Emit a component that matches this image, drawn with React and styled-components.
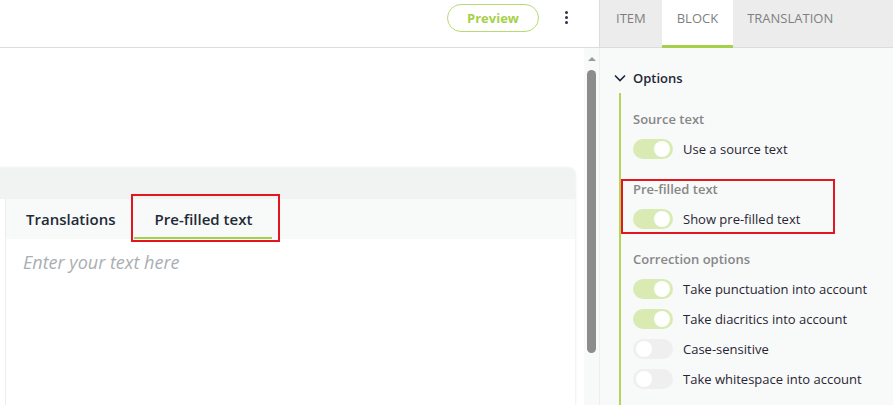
import React from "react"
import styled, { createGlobalStyle } from "styled-components"

const GlobalStyle = createGlobalStyle`
  html, body {
    margin: 0;
    padding: 0;
    background: #ffffff;
    font-family: "Open Sans", "Noto Sans", sans-serif;
  }
  * { box-sizing: border-box; }
`

const GREEN = "#a6d04a"

const Page = styled.div`
  width: 893px;
  height: 405px;
  display: flex;
  overflow: hidden;
`

const Main = styled.div`
  width: 600px;
  display: flex;
  flex-direction: column;
  min-height: 0;
`

const TopBar = styled.header`
  flex-shrink: 0;
  height: 48px;
  border-bottom: 1px solid #dcdcdc;
  border-right: 1px solid #dcdcdc;
  display: flex;
  align-items: flex-start;
  justify-content: flex-end;
  padding: 4px 30px 0 0;
  gap: 26px;
`

const PreviewButton = styled.button`
  width: 92px;
  height: 28px;
  border-radius: 14px;
  border: 1.5px solid #b8da72;
  background: #fff;
  color: ${GREEN};
  font-family: inherit;
  font-weight: 700;
  font-size: 13px;
  padding: 0;
`

const Kebab = styled.div`
  width: 4px;
  padding-top: 7px;
  display: flex;
  flex-direction: column;
  gap: 2px;
  span {
    width: 3px;
    height: 3px;
    border-radius: 50%;
    background: #2b3445;
  }
`

const Body = styled.div`
  flex: 1;
  min-height: 0;
  display: flex;
  overflow: hidden;
`

const Content = styled.div`
  flex: 1;
  padding-top: 120px;
`

const Card = styled.div`
  margin-left: -8px;
  margin-right: 9px;
  height: 260px;
  border-radius: 0 6px 0 0;
  background: #fff;
  box-shadow: 0 0 3px rgba(0, 0, 0, 0.12);
  overflow: hidden;
`

const CardHead = styled.div`
  height: 31px;
  background: #f1f2f2;
`

const Pane = styled.div`
  margin-left: 13px;
  border-left: 1px solid #ececec;
  height: 100%;
`

const CardTabs = styled.div`
  height: 40px;
  background: #f8f9f9;
  display: flex;
  align-items: stretch;
  padding-left: 20px;
`

const CardTab = styled.div`
  position: relative;
  margin-right: ${p => (p.$wide ? "0" : "19px")};
  width: ${p => (p.$wide ? "138px" : "auto")};
  display: flex;
  align-items: center;
  justify-content: center;
  font-size: 15px;
  font-weight: 600;
  color: #222a36;
  padding-top: 2px;
  border-bottom: 2px solid ${p => (p.$active ? GREEN : "transparent")};
`

const Highlight = styled.div`
  position: absolute;
  border: 2px solid #e3161f;
  pointer-events: none;
  left: ${p => p.$l}px;
  top: ${p => p.$t}px;
  right: ${p => p.$r}px;
  bottom: ${p => p.$b}px;
`

const Placeholder = styled.div`
  padding: 11px 0 0 17px;
  font-size: 18px;
  font-style: italic;
  color: #a9aeb3;
`

const Track = styled.div`
  width: 16px;
  background: #f8f9f9;
  border-right: 1px solid #eeeeee;
  display: flex;
  flex-direction: column;
  align-items: center;
  padding-top: 9px;
`

const Arrow = styled.div`
  flex-shrink: 0;
  width: 0;
  height: 0;
  border-left: 4px solid transparent;
  border-right: 4px solid transparent;
  border-bottom: 4px solid #9a9a9a;
  margin-bottom: 9px;
`

const Thumb = styled.div`
  flex-shrink: 0;
  width: 9px;
  height: 283px;
  border-radius: 5px;
  background: #8c8c8c;
`

const Side = styled.aside`
  flex: 1;
  display: flex;
  flex-direction: column;
  background: #f8f9f9;
  min-height: 0;
  overflow: hidden;
`

const SideTabs = styled.div`
  flex-shrink: 0;
  height: 48px;
  background: #ececec;
  border-bottom: 1px solid #dcdcdc;
  display: flex;
`

const SideTab = styled.div`
  padding: 8px ${p => p.$pad}px 0;
  line-height: 20px;
  font-size: 13px;
  color: #7f7f7f;
  text-transform: uppercase;
  background: ${p => (p.$active ? "#fff" : "transparent")};
  border-bottom: 3px solid ${p => (p.$active ? GREEN : "transparent")};
  margin-bottom: -1px;
`

const SideBody = styled.div`
  flex-shrink: 0;
  padding: 21px 0 0 14px;
`

const OptionsHead = styled.div`
  display: flex;
  align-items: center;
  gap: 7px;
  font-size: 13px;
  font-weight: 600;
  color: #1f2836;
  height: 18px;
`

const OptionsBody = styled.div`
  margin: 6px 0 0 5px;
  border-left: 2px solid #b3d65a;
  padding: 16px 0 30px 12px;
  height: 330px;
`

const Section = styled.div`
  position: relative;
  margin-bottom: 15px;
`

const Heading = styled.div`
  height: 20px;
  line-height: 20px;
  font-size: 13px;
  font-weight: 600;
  color: #878787;
  margin-bottom: 5px;
`

const Row = styled.div`
  height: 30px;
  display: flex;
  align-items: center;
  gap: 10px;
  font-size: 13px;
  color: #2a2533;
`

const Switch = styled.div`
  width: 40px;
  height: 20px;
  border-radius: 10px;
  background: ${p => (p.$on ? "#d9eab3" : "#efefef")};
  display: flex;
  align-items: center;
  justify-content: ${p => (p.$on ? "flex-end" : "flex-start")};
  padding: 0 3px;
  span {
    width: 16px;
    height: 16px;
    border-radius: 50%;
    background: #fff;
  }
`

const Toggle = ({ on, children }) => (
  <Row>
    <Switch $on={on}>
      <span />
    </Switch>
    {children}
  </Row>
)

const Chevron = () => (
  <svg width="12" height="8" viewBox="0 0 12 8">
    <path d="M1 1.5 L6 6.5 L11 1.5" fill="none" stroke="#1f2836" strokeWidth="1.6" />
  </svg>
)

export default function App() {
  return (
    <>
      <GlobalStyle />
      <Page>
        <Main>
          <TopBar>
            <PreviewButton>Preview</PreviewButton>
            <Kebab>
              <span />
              <span />
              <span />
            </Kebab>
          </TopBar>
          <Body>
            <Content>
              <Card>
                <CardHead />
                <Pane>
                  <CardTabs>
                    <CardTab>Translations</CardTab>
                    <CardTab $wide $active>
                      Pre-filled text
                      <Highlight $l={-3} $t={-5} $r={-8} $b={-5} />
                    </CardTab>
                  </CardTabs>
                  <Placeholder>Enter your text here</Placeholder>
                </Pane>
              </Card>
            </Content>
            <Track>
              <Arrow />
              <Thumb />
            </Track>
          </Body>
        </Main>
        <Side>
          <SideTabs>
            <SideTab $pad={16}>Item</SideTab>
            <SideTab $pad={15} $active>Block</SideTab>
            <SideTab $pad={14}>Translation</SideTab>
          </SideTabs>
          <SideBody>
            <OptionsHead>
              <Chevron />
              Options
            </OptionsHead>
            <OptionsBody>
              <Section>
                <Heading>Source text</Heading>
                <Toggle on>Use a source text</Toggle>
              </Section>
              <Section>
                <Heading>Pre-filled text</Heading>
                <Toggle on>Show pre-filled text</Toggle>
                <Highlight $l={-12} $t={0} $r={58} $b={0} />
              </Section>
              <Section>
                <Heading>Correction options</Heading>
                <Toggle on>Take punctuation into account</Toggle>
                <Toggle on>Take diacritics into account</Toggle>
                <Toggle>Case-sensitive</Toggle>
                <Toggle>Take whitespace into account</Toggle>
              </Section>
            </OptionsBody>
          </SideBody>
        </Side>
      </Page>
    </>
  )
}
